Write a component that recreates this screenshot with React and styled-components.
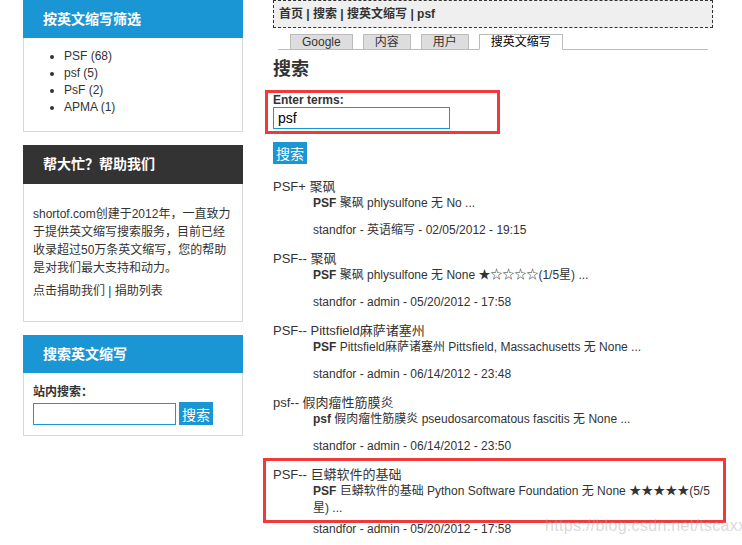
import React from "react";
import styled, { createGlobalStyle } from "styled-components";

const GlobalStyle = createGlobalStyle`
  html, body {
    margin: 0;
    padding: 0;
    background: #fff;
    overflow: hidden;
  }
  body {
    font-family: "Liberation Sans", Arial, "Noto Sans CJK SC", sans-serif;
    font-size: 12px;
    color: #333;
  }
`;

const Page = styled.div`
  display: flex;
  align-items: flex-start;
  gap: 30px;
  padding-left: 23px;
`;

const Sidebar = styled.aside`
  width: 220px;
  display: flex;
  flex-direction: column;
  gap: 13px;
`;

const Block = styled.div`
  display: flex;
  flex-direction: column;
`;

const BlockTitle = styled.h2`
  margin: 0;
  height: ${(p) => p.$h || 38}px;
  line-height: ${(p) => p.$h || 38}px;
  padding-left: 20px;
  font-size: 14px;
  font-weight: bold;
  color: #fff;
  background: ${(p) => (p.$dark ? "#333333" : "#1b96d4")};
`;

const BlockBody = styled.div`
  border: 1px solid #d8d8d8;
  border-top: none;
  padding: ${(p) => p.$pad || "10px"};
  line-height: ${(p) => p.$lh || 17}px;
`;

const FilterList = styled.ul`
  margin: 0 0 5px;
  padding-left: 30px;
  li {
    line-height: 17px;
  }
`;

const Para = styled.p`
  margin: 0 0 ${(p) => p.$mb || 0}px;
`;

const Label = styled.div`
  font-weight: bold;
  line-height: 16px;
  margin-bottom: 2px;
`;

const InlineForm = styled.div`
  display: flex;
  align-items: center;
  gap: 3px;
`;

const TextBox = styled.input`
  box-sizing: border-box;
  width: ${(p) => p.$w}px;
  height: 22px;
  border: 1px solid #1b96d4;
  padding: 0 4px;
  font-family: inherit;
  font-size: 14px;
  color: #000;
  outline: none;
`;

const BlueButton = styled.button`
  background: #1b96d4;
  color: #fff;
  border: none;
  font-family: inherit;
  font-size: 14px;
  height: ${(p) => p.$h || 22}px;
  padding: 0 3px;
  cursor: pointer;
`;

const Main = styled.main`
  width: 440px;
  display: flex;
  flex-direction: column;
`;

const Breadcrumb = styled.div`
  height: 26px;
  line-height: 26px;
  border: 1px dashed #333;
  background: #efefef;
  padding-left: 5px;
  font-weight: bold;
  color: #333;
`;

const Tabs = styled.ul`
  list-style: none;
  display: flex;
  gap: 10px;
  margin: 6px 5px 0;
  padding: 0 0 0 12px;
  border-bottom: 1px solid #bbb;
`;

const Tab = styled.li`
  line-height: 14px;
  padding: 0 11px;
  border: 1px solid #bbb;
  margin-bottom: -1px;
  background: ${(p) => (p.$active ? "#fff" : "#ddd")};
  color: ${(p) => (p.$active ? "#000" : "#333")};
  border-bottom: 1px solid ${(p) => (p.$active ? "#fff" : "#bbb")};
`;

const Heading = styled.h1`
  margin: 8px 0 0;
  font-size: 18px;
  line-height: 22px;
  font-weight: bold;
  color: #333;
`;

const Annotated = styled.div`
  position: relative;
  &::after {
    content: "";
    position: absolute;
    top: ${(p) => p.$top}px;
    left: ${(p) => p.$left}px;
    width: ${(p) => p.$w}px;
    height: ${(p) => p.$h}px;
    box-sizing: border-box;
    border: 3px solid #f03a3a;
    pointer-events: none;
  }
`;

const SearchForm = styled.div`
  margin-top: 13px;
`;

const FormLabel = styled.div`
  font-weight: bold;
  line-height: 14px;
`;

const SubmitRow = styled.div`
  margin-top: 13px;
`;

const Results = styled.dl`
  margin: 14px 0 0;
`;

const ResultTitle = styled.dt`
  font-size: 13px;
  line-height: 17px;
  color: #333;
`;

const ResultBody = styled.dd`
  margin: 0 0 0 40px;
  line-height: 17px;
`;

const Snippet = styled.p`
  margin: 0 0 ${(p) => p.$mb}px;
  b {
    font-weight: bold;
  }
`;

const Info = styled.p`
  margin: 0 0 11px;
`;

const Watermark = styled.div`
  position: absolute;
  left: 545px;
  top: 517px;
  font-size: 16px;
  color: rgba(170, 170, 170, 0.45);
  letter-spacing: 0.3px;
  pointer-events: none;
`;

const results = [
  {
    title: "PSF+ 聚砜",
    key: "PSF",
    snippet: " 聚砜 phlysulfone 无 No ...",
    info: "standfor - 英语缩写 - 02/05/2012 - 19:15",
  },
  {
    title: "PSF-- 聚砜",
    key: "PSF",
    snippet: " 聚砜 phlysulfone 无 None ★☆☆☆☆(1/5星) ...",
    info: "standfor - admin - 05/20/2012 - 17:58",
  },
  {
    title: "PSF-- Pittsfield麻萨诸塞州",
    key: "PSF",
    snippet: " Pittsfield麻萨诸塞州 Pittsfield, Massachusetts 无 None ...",
    info: "standfor - admin - 06/14/2012 - 23:48",
  },
  {
    title: "psf-- 假肉瘤性筋膜炎",
    key: "psf",
    snippet: " 假肉瘤性筋膜炎 pseudosarcomatous fascitis 无 None ...",
    info: "standfor - admin - 06/14/2012 - 23:50",
  },
  {
    title: "PSF-- 巨蟒软件的基础",
    key: "PSF",
    snippet: " 巨蟒软件的基础 Python Software Foundation 无 None ★★★★★(5/5星) ...",
    info: "standfor - admin - 05/20/2012 - 17:58",
    marked: true,
  },
];

const ResultItem = ({ r }) => {
  const head = (
    <>
      <ResultTitle>{r.title}</ResultTitle>
      <ResultBody>
        <Snippet $mb={r.marked ? 4 : 10}>
          <b>{r.key}</b>
          {r.snippet}
        </Snippet>
      </ResultBody>
    </>
  );
  return (
    <>
      {r.marked ? (
        <Annotated $top={-8} $left={-10} $w={463} $h={65}>
          {head}
        </Annotated>
      ) : (
        head
      )}
      <ResultBody>
        <Info>{r.info}</Info>
      </ResultBody>
    </>
  );
};

const App = () => {
  return (
    <>
      <GlobalStyle />
      <Page>
        <Sidebar>
          <Block>
            <BlockTitle>按英文缩写筛选</BlockTitle>
            <BlockBody>
              <FilterList>
                <li>PSF (68)</li>
                <li>psf (5)</li>
                <li>PsF (2)</li>
                <li>APMA (1)</li>
              </FilterList>
            </BlockBody>
          </Block>
          <Block>
            <BlockTitle $dark $h={39}>
              帮大忙？帮助我们
            </BlockTitle>
            <BlockBody $pad="21px 10px 21px 9px" $lh={18}>
              <Para $mb={5}>
                shortof.com创建于2012年，一直致力于提供英文缩写搜索服务，目前已经收录超过50万条英文缩写，您的帮助是对我们最大支持和动力。
              </Para>
              <Para>点击捐助我们 | 捐助列表</Para>
            </BlockBody>
          </Block>
          <Block>
            <BlockTitle>搜索英文缩写</BlockTitle>
            <BlockBody $pad="11px 10px 10px 9px">
              <Label>站内搜索：</Label>
              <InlineForm>
                <TextBox $w={143} />
                <BlueButton $h={23}>搜索</BlueButton>
              </InlineForm>
            </BlockBody>
          </Block>
        </Sidebar>
        <Main>
          <Breadcrumb>首页 | 搜索 | 搜英文缩写 | psf</Breadcrumb>
          <Tabs>
            <Tab>Google</Tab>
            <Tab>内容</Tab>
            <Tab>用户</Tab>
            <Tab $active>搜英文缩写</Tab>
          </Tabs>
          <Heading>搜索</Heading>
          <SearchForm>
            <Annotated $top={-3} $left={-8} $w={235} $h={44}>
              <FormLabel>Enter terms:</FormLabel>
              <TextBox $w={177} defaultValue="psf" />
            </Annotated>
            <SubmitRow>
              <BlueButton>搜索</BlueButton>
            </SubmitRow>
          </SearchForm>
          <Results>
            {results.map((r, i) => (
              <ResultItem key={i} r={r} />
            ))}
          </Results>
        </Main>
      </Page>
      <Watermark>https://blog.csdn.net/tscaxx</Watermark>
    </>
  );
};

export default App;
